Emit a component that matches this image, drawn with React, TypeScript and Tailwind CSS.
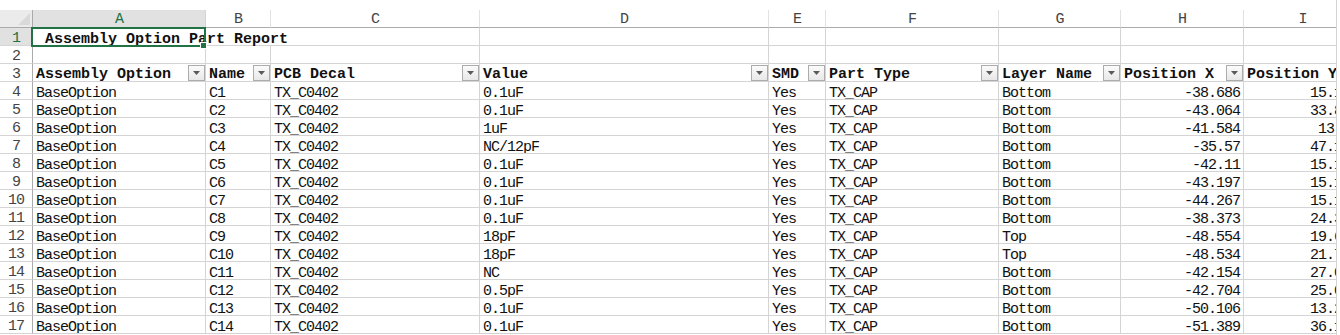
import React from "react";

const W = [173, 65, 209, 289, 57, 173, 122, 123, 118];
const LETTERS = ["A", "B", "C", "D", "E", "F", "G", "H", "I"];
const HEADERS = [
  "Assembly Option",
  "Name",
  "PCB Decal",
  "Value",
  "SMD",
  "Part Type",
  "Layer Name",
  "Position X",
  "Position Y",
];

const DATA: [string, string, string, string, string][] = [
  ["C1", "0.1uF", "Bottom", "-38.686", "15.126"],
  ["C2", "0.1uF", "Bottom", "-43.064", "33.896"],
  ["C3", "1uF", "Bottom", "-41.584", "13.35"],
  ["C4", "NC/12pF", "Bottom", "-35.57", "47.126"],
  ["C5", "0.1uF", "Bottom", "-42.11", "15.126"],
  ["C6", "0.1uF", "Bottom", "-43.197", "15.126"],
  ["C7", "0.1uF", "Bottom", "-44.267", "15.126"],
  ["C8", "0.1uF", "Bottom", "-38.373", "24.326"],
  ["C9", "18pF", "Top", "-48.554", "19.626"],
  ["C10", "18pF", "Top", "-48.534", "21.726"],
  ["C11", "NC", "Bottom", "-42.154", "27.026"],
  ["C12", "0.5pF", "Bottom", "-42.704", "25.026"],
  ["C13", "0.1uF", "Bottom", "-50.106", "13.226"],
  ["C14", "0.1uF", "Bottom", "-51.389", "36.126"],
];

function FilterBtn() {
  return (
    <div className="w-[17px] h-[16px] shrink-0 border border-[#acacac] bg-gradient-to-b from-[#fbfbfb] to-[#e8e8e8] flex items-center justify-center">
      <svg width="7" height="4" viewBox="0 0 7 4">
        <path d="M0 0 H7 L3.5 4 Z" fill="#5a5a5a" />
      </svg>
    </div>
  );
}

function RowHeader({ n, selected }: { n: number; selected?: boolean }) {
  return (
    <div
      className={
        "w-[33px] shrink-0 h-full border-r border-b border-r-[#ababab] border-b-[#d5d5d5] flex items-center justify-center pt-[4px] text-[15px] tracking-[-1px] " +
        (selected ? "bg-[#e1e1e1] text-[#217346]" : "bg-white text-[#444]")
      }
    >
      {n}
    </div>
  );
}

function Cell({
  w,
  children,
  right,
}: {
  w: number;
  children?: React.ReactNode;
  right?: boolean;
}) {
  return (
    <div
      style={{ width: w }}
      className={
        "shrink-0 h-full border-r border-b border-[#d4d4d4] flex items-center px-[3px] pt-[5px] whitespace-nowrap overflow-hidden tracking-[-1px] " +
        (right ? "justify-end" : "")
      }
    >
      {children}
    </div>
  );
}

export default function App() {
  return (
    <div className="w-[1340px] h-[335px] bg-white overflow-hidden [font-family:'Liberation_Mono','Noto_Sans_CJK_SC',monospace] text-[15px] leading-[15px] text-[#111]">
      <div className="w-[1337px] h-full overflow-hidden border-r border-[#d4d4d4] relative">
        <div className="h-[10px]" />
        {/* column letters */}
        <div className="flex h-[18px] text-[#444] text-[15px] tracking-[-1px]">
          <div className="w-[33px] shrink-0 h-full bg-[#ebebeb] border-r border-b border-[#ababab] flex items-end justify-end p-[2px]">
            <svg width="12" height="12" viewBox="0 0 12 12">
              <path d="M12 0 V12 H0 Z" fill="#d9d9d9" />
            </svg>
          </div>
          {W.map((w, i) => (
            <div
              key={i}
              style={{ width: w }}
              className={
                "shrink-0 h-full border-r border-b flex items-center justify-center pt-[2px] " +
                (i === 0
                  ? "bg-[#e1e1e1] text-[#217346] border-r-[#d4d4d4] border-b-[#217346]"
                  : "bg-white border-r-[#e1e1e1] border-b-[#ababab]")
              }
            >
              {LETTERS[i]}
            </div>
          ))}
        </div>
        {/* row 1 */}
        <div className="flex h-[18px]">
          <RowHeader n={1} selected />
          <div
            style={{ width: W[0] + W[1] + W[2] }}
            className="shrink-0 h-full border-r border-b border-[#d4d4d4] flex items-center px-[3px] pt-[5px] font-bold whitespace-pre"
          >
            {" Assembly Option Part Report"}
          </div>
          {W.slice(3).map((w, i) => (
            <Cell key={i} w={w} />
          ))}
        </div>
        {/* row 2 */}
        <div className="flex h-[18px]">
          <RowHeader n={2} />
          {W.map((w, i) => (
            <Cell key={i} w={w} />
          ))}
        </div>
        {/* row 3 headers */}
        <div className="flex h-[18px]">
          <RowHeader n={3} />
          {W.map((w, i) => (
            <div
              key={i}
              style={{ width: w }}
              className="shrink-0 h-full border-r border-b border-[#d4d4d4] flex items-center pl-[3px] font-bold whitespace-nowrap overflow-hidden"
            >
              <span className="flex-1 pt-[4px]">{HEADERS[i]}</span>
              {i < 8 && <FilterBtn />}
            </div>
          ))}
        </div>
        {DATA.map((r, idx) => (
          <div key={idx} className="flex h-[18px]">
            <RowHeader n={idx + 4} />
            <Cell w={W[0]}>BaseOption</Cell>
            <Cell w={W[1]}>{r[0]}</Cell>
            <Cell w={W[2]}>TX_C0402</Cell>
            <Cell w={W[3]}>{r[1]}</Cell>
            <Cell w={W[4]}>Yes</Cell>
            <Cell w={W[5]}>TX_CAP</Cell>
            <Cell w={W[6]}>{r[2]}</Cell>
            <Cell w={W[7]} right>
              {r[3]}
            </Cell>
            <Cell w={W[8]} right>
              {r[4]}
            </Cell>
          </div>
        ))}
        {/* selection box on A1 */}
        <div className="absolute left-[31px] top-[27px] w-[175px] h-[20px] border-2 border-[#217346] pointer-events-none" />
        <div className="absolute left-[200px] top-[42px] w-[7px] h-[7px] bg-[#217346] border border-white" />
      </div>
    </div>
  );
}
